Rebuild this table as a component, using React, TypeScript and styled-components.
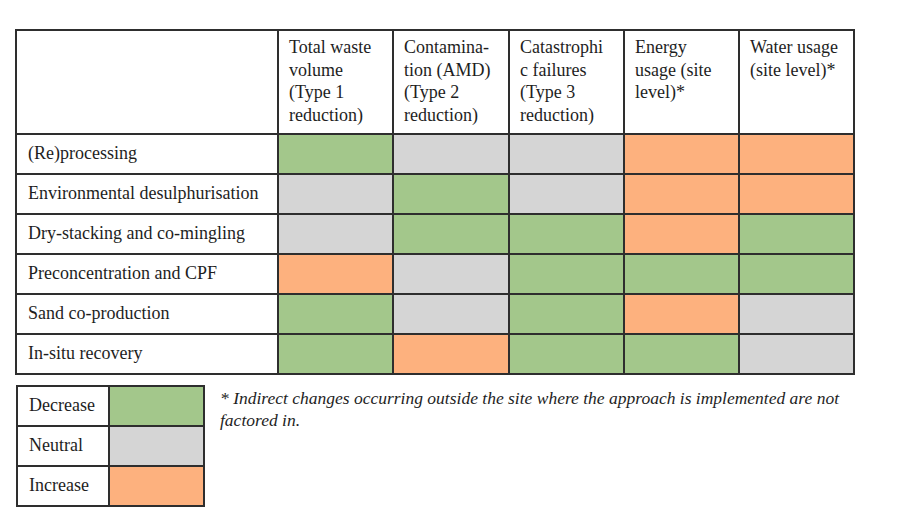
import React from "react";
import styled, { createGlobalStyle } from "styled-components";

const Global = createGlobalStyle`
  html, body { margin: 0; padding: 0; background: #ffffff; }
  body { font-family: "Liberation Serif", "Times New Roman", serif; color: #1e1e1e; }
`;

type Level = "dec" | "neu" | "inc";
const COLORS: Record<Level, string> = {
  dec: "#a3c78b",
  neu: "#d5d5d5",
  inc: "#fdb17e",
};

const Page = styled.div`
  padding: 29px 0 0 15px;
  display: flex;
  flex-direction: column;
  gap: 10px;
`;

const Table = styled.div`
  display: grid;
  grid-template-columns: 260px 113px 114px 113px 113px 113px;
  grid-template-rows: 102px repeat(6, 38px);
  gap: 2px;
  padding: 2px;
  background: #2e2e2e;
  width: max-content;
`;

const HeadCell = styled.div`
  background: #fff;
  padding: 5px 0 0 10px;
  font-size: 18px;
  line-height: 22.5px;
  white-space: nowrap;
  overflow: hidden;
`;

const LabelCell = styled.div`
  background: #fff;
  display: flex;
  align-items: center;
  padding: 0 0 2px 11px;
  font-size: 18px;
  white-space: nowrap;
`;

const ColorCell = styled.div<{ $level: Level }>`
  background: ${(p) => COLORS[p.$level]};
`;

const Bottom = styled.div`
  display: flex;
  align-items: flex-start;
  gap: 15px;
`;

const Legend = styled.div`
  display: grid;
  grid-template-columns: 90px 93px;
  grid-template-rows: repeat(3, 38px);
  gap: 2px;
  padding: 2px;
  background: #2e2e2e;
  margin-left: 1px;
`;

const Note = styled.p`
  margin: 2px 0 0 0;
  width: 630px;
  font-style: italic;
  font-size: 17.5px;
  line-height: 22px;
`;

const headers: string[][] = [
  [],
  ["Total waste", "volume", "(Type 1", "reduction)"],
  ["Contamina-", "tion (AMD)", "(Type 2", "reduction)"],
  ["Catastrophi", "c failures", "(Type 3", "reduction)"],
  ["Energy", "usage (site", "level)*"],
  ["Water usage", "(site level)*"],
];

const rows: { label: string; values: Level[] }[] = [
  { label: "(Re)processing", values: ["dec", "neu", "neu", "inc", "inc"] },
  { label: "Environmental desulphurisation", values: ["neu", "dec", "neu", "inc", "inc"] },
  { label: "Dry-stacking and co-mingling", values: ["neu", "dec", "dec", "inc", "dec"] },
  { label: "Preconcentration and CPF", values: ["inc", "neu", "dec", "dec", "dec"] },
  { label: "Sand co-production", values: ["dec", "neu", "dec", "inc", "neu"] },
  { label: "In-situ recovery", values: ["dec", "inc", "dec", "dec", "neu"] },
];

const legend: { label: string; level: Level }[] = [
  { label: "Decrease", level: "dec" },
  { label: "Neutral", level: "neu" },
  { label: "Increase", level: "inc" },
];

export default function App() {
  return (
    <>
      <Global />
      <Page>
        <Table>
          {headers.map((lines, i) => (
            <HeadCell key={i}>
              {lines.map((part, j) => (
                <React.Fragment key={j}>
                  {j > 0 && <br />}
                  {part}
                </React.Fragment>
              ))}
            </HeadCell>
          ))}
          {rows.map((r) => (
            <React.Fragment key={r.label}>
              <LabelCell>{r.label}</LabelCell>
              {r.values.map((v, i) => (
                <ColorCell key={i} $level={v} />
              ))}
            </React.Fragment>
          ))}
        </Table>
        <Bottom>
          <Legend>
            {legend.map((l) => (
              <React.Fragment key={l.label}>
                <LabelCell>{l.label}</LabelCell>
                <ColorCell $level={l.level} />
              </React.Fragment>
            ))}
          </Legend>
          <Note>
            * Indirect changes occurring outside the site where the approach is implemented are not factored in.
          </Note>
        </Bottom>
      </Page>
    </>
  );
}
